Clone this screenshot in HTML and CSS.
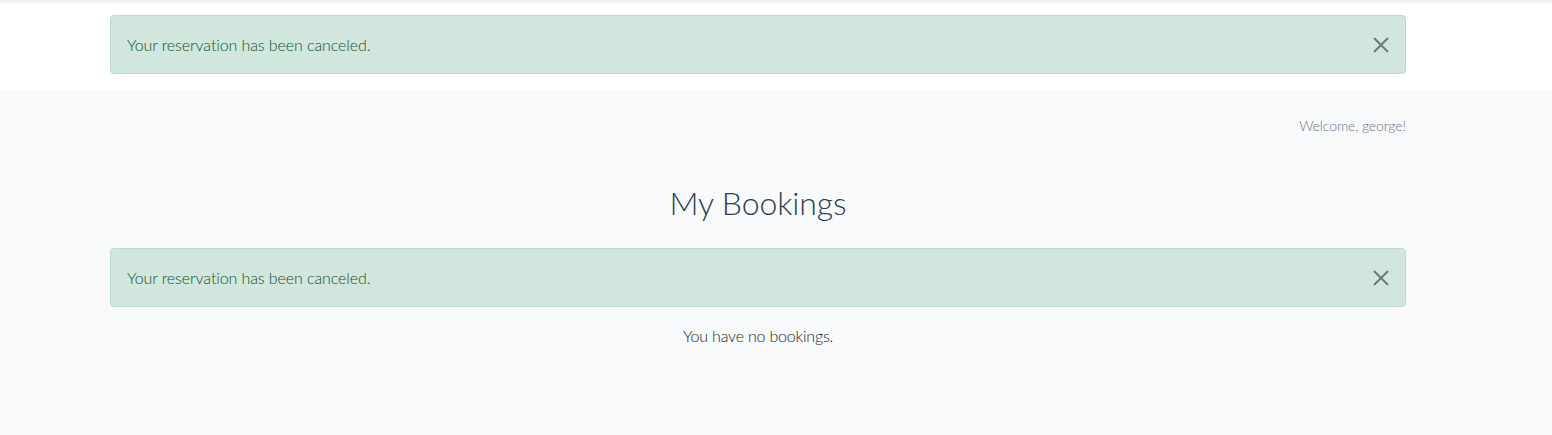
FILE: index.html
```html
<!DOCTYPE html>
<html lang="en">
<head>
<meta charset="utf-8">
<title>My Bookings</title>
<link rel="stylesheet" href="styles.css">
</head>
<body>
<header class="top">
  <div class="container">
    <div class="alert">
      <span>Your reservation has been canceled.</span>
      <button class="close" aria-label="Close">
        <svg viewBox="0 0 16 16" width="16" height="16"><path d="M1 1L15 15M15 1L1 15" stroke="currentColor" stroke-width="1.8" fill="none"/></svg>
      </button>
    </div>
  </div>
</header>
<main class="main">
  <div class="container">
    <div class="welcome">Welcome, george!</div>
    <h2 class="title">My Bookings</h2>
    <div class="alert">
      <span>Your reservation has been canceled.</span>
      <button class="close" aria-label="Close">
        <svg viewBox="0 0 16 16" width="16" height="16"><path d="M1 1L15 15M15 1L1 15" stroke="currentColor" stroke-width="1.8" fill="none"/></svg>
      </button>
    </div>
    <p class="empty">You have no bookings.</p>
  </div>
</main>
</body>
</html>
```
FILE: styles.css
```css
* { box-sizing: border-box; }
html, body { margin: 0; padding: 0; }
body {
  font-family: Lato, "Liberation Sans", sans-serif;
  font-weight: 300;
  font-size: 16px;
  line-height: 1.5;
  color: #212529;
  background: #f8f9fa;
  height: 435px;
}
.container {
  width: 1296px;
  margin-left: 110px;
}
.top {
  background: linear-gradient(to bottom, #ececec 0px, #f6f6f6 2px, #ffffff 5px);
  padding: 15px 0 15px;
  height: 90px;
}
.alert {
  display: flex;
  align-items: center;
  justify-content: space-between;
  height: 59px;
  padding: 0 16px;
  background: #d1e7dd;
  border: 1px solid #badbcc;
  border-radius: 4px;
  color: #0f5132;
  letter-spacing: -0.1px;
}
.close {
  border: 0;
  background: transparent;
  padding: 0;
  width: 16px;
  height: 16px;
  margin-right: 0;
  color: #6a766f;
  display: flex;
  cursor: pointer;
}
.main {
  padding-top: 25px;
}
.welcome {
  text-align: right;
  font-size: 14px;
  color: #6c757d;
  line-height: 21px;
  letter-spacing: -0.1px;
}
.title {
  margin: 43px 0 0;
  text-align: center;
  font-weight: 300;
  font-size: 32px;
  line-height: 48px;
  color: #2c3e50;
  height: 69px;
  letter-spacing: -0.1px;
}
.empty {
  margin: 17px 0 0;
  text-align: center;
  color: #212529;
  letter-spacing: -0.2px;
}
```
